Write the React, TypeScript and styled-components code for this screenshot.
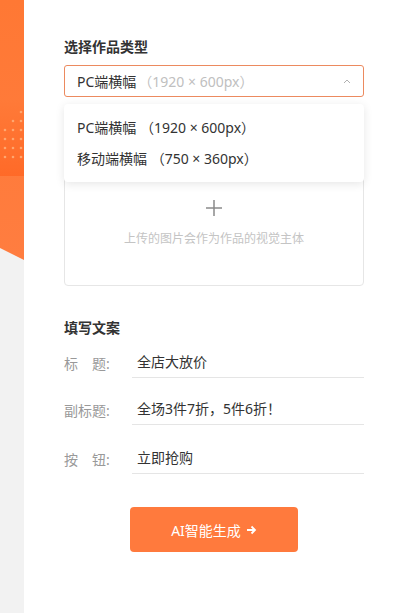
import React from "react";
import styled, { createGlobalStyle } from "styled-components";

const GlobalStyle = createGlobalStyle`
  html, body {
    margin: 0;
    padding: 0;
    background: #f2f2f2;
    font-family: "Noto Sans", "Noto Sans CJK SC", sans-serif;
  }
`;

const Page = styled.div`
  display: flex;
  width: 404px;
  height: 613px;
  overflow: hidden;
`;

const Strip = styled.div`
  width: 24px;
  flex-shrink: 0;
  svg {
    display: block;
  }
`;

const Panel = styled.div`
  flex: 1;
  background: #fff;
  padding: 37px 40px 0 40px;
  box-sizing: border-box;
  display: flex;
  flex-direction: column;
`;

const SectionTitle = styled.div`
  font-size: 14px;
  line-height: 20px;
  font-weight: bold;
  color: #333;
`;

const SelectWrap = styled.div`
  position: relative;
  margin-top: 8px;
`;

const SelectBox = styled.div`
  height: 32px;
  box-sizing: border-box;
  border: 1px solid #ec8a5f;
  border-radius: 3px;
  display: flex;
  align-items: center;
  padding: 0 12px;
  font-size: 14px;
  color: #333;
  .hint {
    color: #c0c0c0;
    margin-left: 2px;
  }
  .arrow {
    margin-left: auto;
    display: flex;
    color: #b0b0b0;
  }
`;

const Dropdown = styled.div`
  position: absolute;
  left: 0;
  right: 0;
  top: 39px;
  background: #fff;
  border-radius: 4px;
  box-shadow: 0 2px 10px rgba(0, 0, 0, 0.1);
  padding: 8px 0;
  z-index: 2;
`;

const Option = styled.div`
  height: 31px;
  line-height: 31px;
  padding: 0 13px;
  font-size: 14px;
  color: #333;
`;

const Upload = styled.div`
  margin-top: 8px;
  height: 181px;
  border: 1px solid #e6e6e6;
  border-radius: 4px;
  box-sizing: border-box;
  display: flex;
  flex-direction: column;
  align-items: center;
  padding-top: 93px;
  color: #888;
  p {
    margin: 12px 0 0;
    font-size: 12px;
    color: #c4c4c4;
  }
`;

const CopyTitle = styled(SectionTitle)`
  margin-top: 32px;
`;

const Rows = styled.div`
  margin-top: 9px;
  display: flex;
  flex-direction: column;
  gap: 16px;
`;

const Row = styled.div<{ $gap?: number }>`
  display: flex;
  align-items: center;
  margin-top: ${({ $gap }) => $gap ?? 0}px;
`;

const Label = styled.div`
  width: 68px;
  flex-shrink: 0;
  font-size: 14px;
  color: #999;
  white-space: pre;
`;

const Field = styled.div`
  flex: 1;
  height: 30px;
  line-height: 30px;
  border-bottom: 1px solid #e5e5e5;
  padding-left: 5px;
  font-size: 14px;
  color: #333;
`;

const Submit = styled.button`
  margin: 33px auto 0;
  width: 168px;
  height: 45px;
  border: none;
  border-radius: 4px;
  background: #ff7a3d;
  color: #fff;
  font-family: inherit;
  font-size: 14px;
  display: flex;
  align-items: center;
  justify-content: center;
  gap: 5px;
`;

const dots: [number, number][] = [];
for (let r = 0; r < 6; r++) {
  for (let c = 0; c < 3; c++) {
    if (r === 0 && c < 2) continue;
    if (r === 1 && c < 1) continue;
    dots.push([5 + c * 8, 112 + r * 9]);
  }
}

const App: React.FC = () => {
  return (
    <>
      <GlobalStyle />
      <Page>
        <Strip>
          <svg width="24" height="613" viewBox="0 0 24 613">
            <defs>
              <linearGradient id="og" x1="0" y1="0" x2="0" y2="1">
                <stop offset="0" stopColor="#ff7834" />
                <stop offset="1" stopColor="#ff7d40" />
              </linearGradient>
              <linearGradient id="band" x1="0" y1="0" x2="0" y2="1">
                <stop offset="0" stopColor="#ff7a38" />
                <stop offset="1" stopColor="#ff6a28" />
              </linearGradient>
            </defs>
            <rect width="24" height="613" fill="#f2f2f2" />
            <polygon points="0,0 24,0 24,260 0,248" fill="url(#og)" />
            <rect y="100" width="24" height="76" fill="url(#band)" />
            {dots.map(([x, y], i) => (
              <circle key={i} cx={x} cy={y} r="1.3" fill="#ffa66f" />
            ))}
          </svg>
        </Strip>
        <Panel>
          <SectionTitle>选择作品类型</SectionTitle>
          <SelectWrap>
            <SelectBox>
              PC端横幅<span className="hint">（1920 × 600px）</span>
              <span className="arrow">
                <svg width="8" height="5" viewBox="0 0 8 5">
                  <path d="M1 4 L4 1 L7 4" fill="none" stroke="currentColor" strokeWidth="1" />
                </svg>
              </span>
            </SelectBox>
            <Dropdown>
              <Option>PC端横幅 （1920 × 600px）</Option>
              <Option>移动端横幅 （750 × 360px）</Option>
            </Dropdown>
            <Upload>
              <svg width="18" height="18" viewBox="0 0 18 18">
                <path d="M9 1 V17 M1 9 H17" stroke="#8a8a8a" strokeWidth="1.5" />
              </svg>
              <p>上传的图片会作为作品的视觉主体</p>
            </Upload>
          </SelectWrap>
          <CopyTitle>填写文案</CopyTitle>
          <Rows>
            <Row>
              <Label>标　题:</Label>
              <Field>全店大放价</Field>
            </Row>
            <Row>
              <Label>副标题:</Label>
              <Field>全场3件7折，5件6折！</Field>
            </Row>
            <Row $gap={2}>
              <Label>按　钮:</Label>
              <Field>立即抢购</Field>
            </Row>
          </Rows>
          <Submit>
            AI智能生成
            <svg width="11" height="10" viewBox="0 0 11 10">
              <path d="M1 5 H9 M5.5 1.5 L9 5 L5.5 8.5" fill="none" stroke="#fff" strokeWidth="1.8" />
            </svg>
          </Submit>
        </Panel>
      </Page>
    </>
  );
};

export default App;
